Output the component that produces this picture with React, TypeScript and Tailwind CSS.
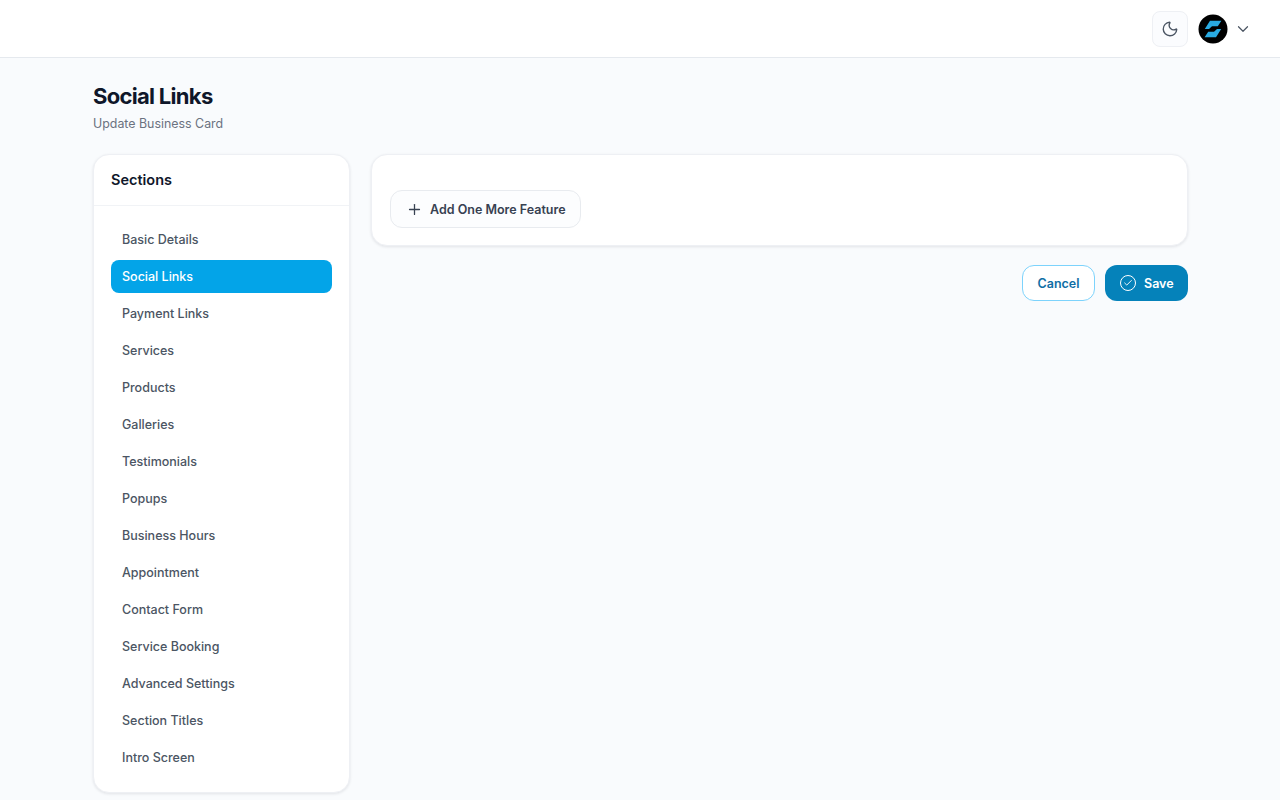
import { Check, ChevronDown, Moon, Plus } from 'lucide-react';

const SECTIONS = [
  'Basic Details',
  'Social Links',
  'Payment Links',
  'Services',
  'Products',
  'Galleries',
  'Testimonials',
  'Popups',
  'Business Hours',
  'Appointment',
  'Contact Form',
  'Service Booking',
  'Advanced Settings',
  'Section Titles',
  'Intro Screen',
];

const Logo = () => (
  <svg width="30" height="30" viewBox="0 0 30 30">
    <circle cx="15" cy="15" r="14.5" fill="#000" />
    <path d="M12 6.8H23.4L19.8 12.2H14L11 15H6.8Z" fill="#29abe2" />
    <path d="M18 23.2H6.6L10.2 17.8H16L19 15H23.2Z" fill="#29abe2" />
  </svg>
);

const App = () => {
  return (
    <div className="min-h-[800px] bg-[#f9fbfd] font-['Inter',sans-serif] text-[12.5px] text-[#4b5563]">
      <header className="h-[58px] bg-white border-b border-[#e5e9ee] flex items-center justify-end pr-[28px]">
        <button className="w-9 h-9 rounded-lg border border-[#eef0f4] bg-[#fbfcfe] flex items-center justify-center text-[#4b5563]">
          <Moon size={18} strokeWidth={1.8} />
        </button>
        <div className="ml-[10px]">
          <Logo />
        </div>
        <ChevronDown size={18} strokeWidth={1.6} className="ml-[6px] text-[#4b5563]" />
      </header>

      <main className="w-[1095px] ml-[93px] pt-[23px]">
        <h1 className="text-[22px] leading-[30px] font-bold tracking-[-0.7px] text-[#0f172a]">Social Links</h1>
        <p className="mt-[3px] text-[12.4px] leading-5 text-[#6b7280]">Update Business Card</p>

        <div className="mt-[20px] flex items-start gap-[21px]">
          <aside className="w-[257px] shrink-0 bg-white rounded-2xl border border-[#eef0f4] shadow-[0_1px_3px_rgba(15,23,42,0.1)]">
            <h2 className="h-[51px] px-[17px] pb-px flex items-center text-[14.5px] font-semibold text-[#0f172a] border-b border-[#f1f3f6]">
              Sections
            </h2>
            <ul className="px-[17px] pt-[17px] pb-[18px] flex flex-col gap-1">
              {SECTIONS.map((name) => (
                <li
                  key={name}
                  className={
                    name === 'Social Links'
                      ? 'h-[33px] px-[11px] pt-[2px] flex items-center rounded-lg bg-[#03a4e8] text-white font-medium'
                      : 'h-[33px] px-[11px] pt-[2px] flex items-center rounded-lg font-medium'
                  }
                >
                  {name}
                </li>
              ))}
            </ul>
          </aside>

          <div className="flex-1">
            <section className="h-[92px] bg-white rounded-2xl border border-[#eef0f4] shadow-[0_1px_3px_rgba(15,23,42,0.1)] pl-[18px] pt-[35px]">
              <button className="h-[38px] w-[191px] pl-[15px] flex items-center gap-[7px] rounded-xl border border-[#e8ebef] bg-[#fcfdfe] text-[#374151] font-semibold">
                <Plus size={17} strokeWidth={1.8} />
                <span className="pt-[2px]">Add One More Feature</span>
              </button>
            </section>

            <div className="mt-[19px] flex justify-end gap-[10px]">
              <button className="w-[73px] h-[36px] pt-[2px] rounded-xl border border-[#7dd3fc] bg-white text-[#0f6ea5] font-semibold text-[12.5px]">
                Cancel
              </button>
              <button className="w-[83px] h-[36px] pl-[15px] flex items-center gap-[8px] rounded-xl bg-[#0582ba] text-white font-semibold">
                <span className="w-4 h-4 rounded-full border-[1.5px] border-white flex items-center justify-center">
                  <Check size={10} strokeWidth={2.2} />
                </span>
                <span className="pt-[2px]">Save</span>
              </button>
            </div>
          </div>
        </div>
      </main>
    </div>
  );
};

export default App;
